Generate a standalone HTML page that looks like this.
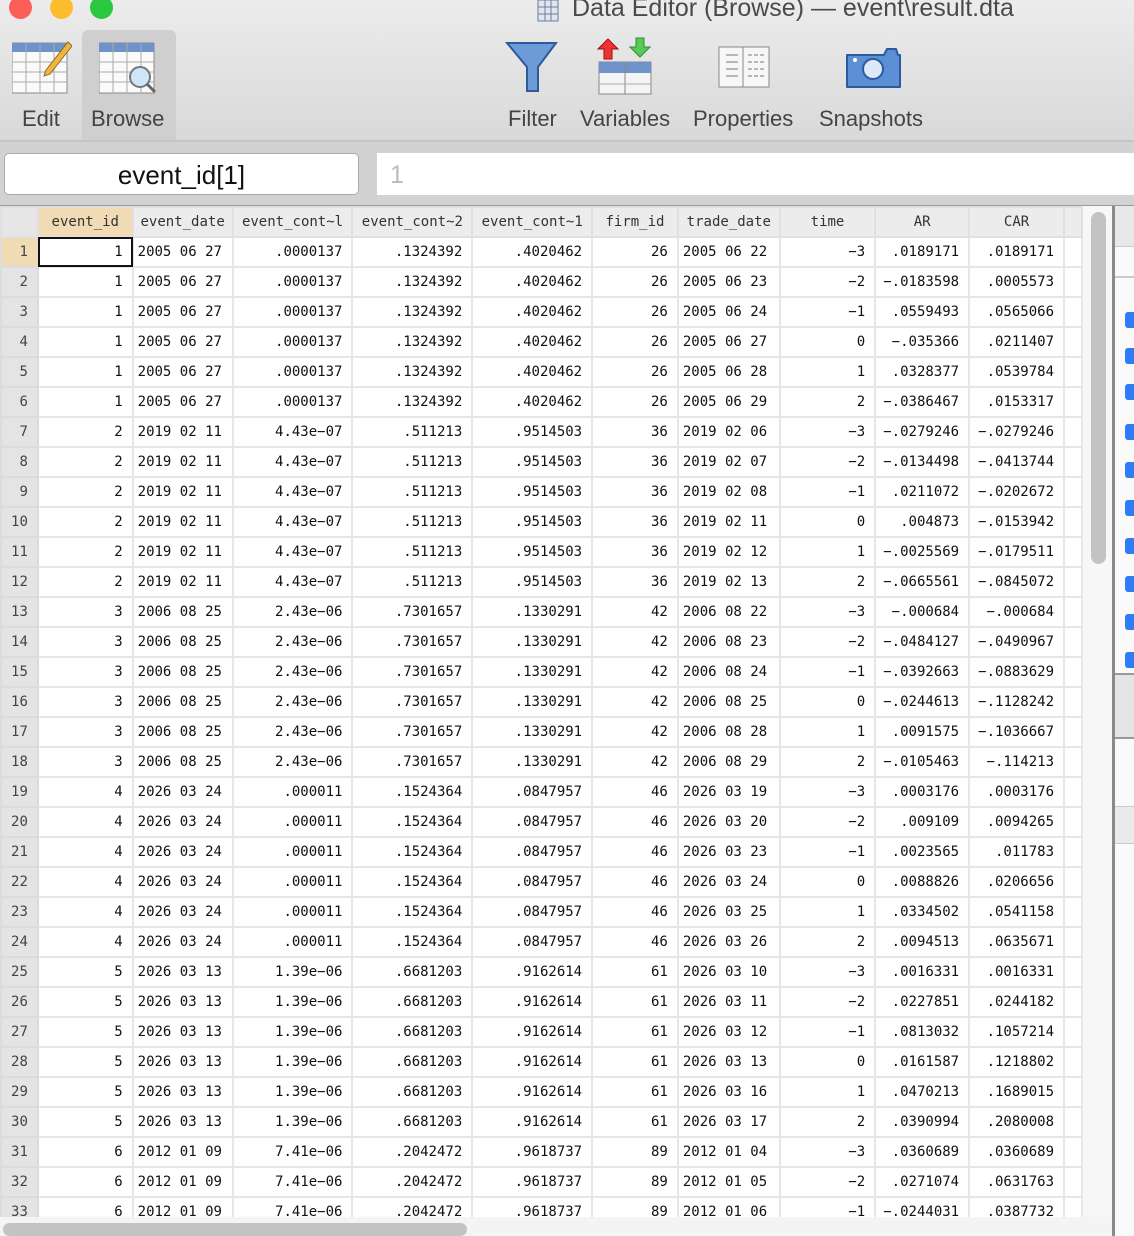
<!DOCTYPE html>
<html><head><meta charset="utf-8"><style>
body{margin:0;width:1134px;height:1236px;overflow:hidden;background:#fff;font-family:"Liberation Sans",sans-serif;position:relative}
.tb{position:absolute;left:0;top:0;width:1134px;height:140px;background:linear-gradient(#ececec,#d9d9d9);border-bottom:2px solid #c4c4c4}
.title{position:absolute;left:572px;top:-6px;font-size:25px;color:#4a4a4a}
.dot{position:absolute;top:-4px;width:23px;height:23px;border-radius:50%}
.lbl{position:absolute;top:106px;font-size:22px;color:#444}
.band{position:absolute;left:0;top:142px;width:1134px;height:63px;background:#d2d2d2;border-bottom:3px solid #9a9a9a}
.box1{position:absolute;left:4px;top:153px;width:353px;height:40px;background:#fff;border:1px solid #aaa;border-radius:5px;font-size:26px;text-align:center;line-height:42px;color:#111}
.box2{position:absolute;left:377px;top:153px;width:757px;height:42px;background:#fff;font-size:25px;line-height:44px;color:#bbb;padding-left:13px;box-sizing:border-box}
.grid{position:absolute;left:0;top:206px;width:1083px;height:1011px;overflow:hidden;background:#fff}
table{border-collapse:collapse;table-layout:fixed;font-family:"DejaVu Sans Mono","Liberation Mono",monospace;font-size:14px;color:#111}
td{height:28px;border:2px solid #e6e6e6;padding:0 9px 0 0;text-align:right;white-space:nowrap;overflow:hidden}
tr.h td{background:#ececec;color:#333;text-align:center;padding:0;border-color:#e0e0e0}
td.n{background:#e4e4e4;color:#444;padding-right:9px;border-color:#dcdcdc}
td.d{text-align:left;padding-left:4px}
.vs{position:absolute;left:1083px;top:206px;width:29px;height:1011px;background:#f7f7f7}
.vt{position:absolute;left:1091px;top:212px;width:15px;height:352px;border-radius:8px;background:#c3c3c3}
.hs{position:absolute;left:0;top:1217px;width:1112px;height:19px;background:#f4f4f4}
.ht{position:absolute;left:3px;top:1223px;width:464px;height:13px;border-radius:7px;background:#c3c3c3}
.rp{position:absolute;left:1112px;top:206px;width:22px;height:1030px;background:#fafafa;border-left:3px solid #8a8a8a}
.cb{position:absolute;left:1125px;width:12px;height:16px;background:#2f7df6;border-radius:3px}
</style></head><body>
<div class="tb">
<div class="dot" style="left:9px;background:#fc5f57"></div>
<div class="dot" style="left:50px;background:#fdbc2e"></div>
<div class="dot" style="left:90px;background:#29c840"></div>
<svg style="position:absolute;left:537px;top:0" width="22" height="22"><rect x="1" y="0" width="20" height="21" fill="#dfe6ef" stroke="#6b7f99"/><g stroke="#6b7f99"><line x1="1" y1="7" x2="21" y2="7"/><line x1="1" y1="14" x2="21" y2="14"/><line x1="8" y1="0" x2="8" y2="21"/><line x1="14" y1="0" x2="14" y2="21"/></g></svg>
<div class="title">Data Editor (Browse) — event\result.dta</div>
<div style="position:absolute;left:82px;top:30px;width:94px;height:110px;background:#cfcfcf;border-radius:6px 6px 0 0"></div>
<svg style="position:absolute;left:12px;top:40px" width="60" height="54"><rect x="0" y="3" width="55" height="50" fill="#fafafa" stroke="#888"/><rect x="0" y="3" width="55" height="9" fill="#6f93c8"/><g stroke="#aaa"><line x1="0" y1="22" x2="55" y2="22"/><line x1="0" y1="32" x2="55" y2="32"/><line x1="0" y1="42" x2="55" y2="42"/><line x1="14" y1="3" x2="14" y2="53"/><line x1="28" y1="3" x2="28" y2="53"/><line x1="42" y1="3" x2="42" y2="53"/></g><path d="M34 30 L56 2 L60 6 L38 34 L32 36Z" fill="#f1b640" stroke="#8a6a20"/></svg>
<svg style="position:absolute;left:99px;top:42px" width="62" height="54"><rect x="0" y="1" width="55" height="50" fill="#fafafa" stroke="#888"/><rect x="0" y="1" width="55" height="9" fill="#6f93c8"/><g stroke="#aaa"><line x1="0" y1="20" x2="55" y2="20"/><line x1="0" y1="30" x2="55" y2="30"/><line x1="0" y1="40" x2="55" y2="40"/><line x1="14" y1="1" x2="14" y2="51"/><line x1="28" y1="1" x2="28" y2="51"/><line x1="42" y1="1" x2="42" y2="51"/></g><circle cx="41" cy="35" r="10" fill="#cfe6f7" stroke="#777" stroke-width="2"/><line x1="48" y1="42" x2="56" y2="50" stroke="#666" stroke-width="3"/></svg>
<div class="lbl" style="left:22px">Edit</div><div class="lbl" style="left:91px">Browse</div>
<svg style="position:absolute;left:505px;top:41px" width="54" height="54"><path d="M2 2 H51 L33 26 V50 H22 V26Z" fill="#6c9bd8" stroke="#2c5a9a" stroke-width="2"/></svg>
<svg style="position:absolute;left:596px;top:37px" width="62" height="60"><path d="M12 2 L22 12 H16 V22 H8 V12 H2Z" fill="#e33" stroke="#911"/><path d="M44 20 L54 10 H48 V1 H40 V10 H34Z" fill="#5c5" stroke="#383"/><rect x="3" y="25" width="52" height="32" fill="#f4f4f4" stroke="#888"/><rect x="3" y="25" width="52" height="11" fill="#6f93c8"/><line x1="29" y1="25" x2="29" y2="57" stroke="#888"/><line x1="3" y1="47" x2="55" y2="47" stroke="#aaa"/></svg>
<div class="lbl" style="left:508px">Filter</div><div class="lbl" style="left:580px">Variables</div>
<svg style="position:absolute;left:718px;top:46px" width="54" height="44"><rect x="1" y="1" width="50" height="40" fill="#f7f7f7" stroke="#888"/><line x1="25" y1="1" x2="25" y2="41" stroke="#888"/><g stroke="#777"><line x1="8" y1="9" x2="20" y2="9"/><line x1="8" y1="16" x2="20" y2="16"/><line x1="8" y1="23" x2="20" y2="23"/><line x1="8" y1="30" x2="20" y2="30"/><line x1="30" y1="9" x2="46" y2="9" stroke-dasharray="4 2"/><line x1="30" y1="16" x2="46" y2="16" stroke-dasharray="4 2"/><line x1="30" y1="23" x2="46" y2="23" stroke-dasharray="4 2"/><line x1="30" y1="30" x2="46" y2="30" stroke-dasharray="4 2"/></g></svg>
<svg style="position:absolute;left:846px;top:47px" width="56" height="42"><path d="M1 8 H38 L41 2 H50 L52 8 H54 V40 H1Z" fill="#5c8fd6" stroke="#2b5a9f" stroke-width="2" stroke-linejoin="round"/><circle cx="27" cy="22" r="10" fill="#dbe9f8" stroke="#2b5a9f" stroke-width="2"/><circle cx="9" cy="13" r="2" fill="#fff"/></svg>
<div class="lbl" style="left:693px">Properties</div><div class="lbl" style="left:819px">Snapshots</div>
</div>
<div class="band"></div>
<div class="box1">event_id[1]</div>
<div class="box2">1</div>
<div class="grid"><table>
<colgroup><col style="width:37px"><col style="width:95px"><col style="width:100px"><col style="width:120px"><col style="width:120px"><col style="width:120px"><col style="width:86px"><col style="width:102px"><col style="width:96px"><col style="width:94px"><col style="width:95px"><col style="width:18px"></colgroup>
<tr class="h"><td style="background:#e6e6e6"></td><td style="background:#f1dbb4">event_id</td><td>event_date</td><td>event_cont~l</td><td>event_cont~2</td><td>event_cont~1</td><td>firm_id</td><td>trade_date</td><td>time</td><td>AR</td><td>CAR</td><td></td></tr>
<tr><td class="n" style="background:#f1dbb4">1</td><td style="outline:2px solid #111;outline-offset:-2px">1</td><td class="d">2005 06 27</td><td>.0000137</td><td>.1324392</td><td>.4020462</td><td>26</td><td class="d">2005 06 22</td><td>−3</td><td>.0189171</td><td>.0189171</td><td></td></tr>
<tr><td class="n">2</td><td>1</td><td class="d">2005 06 27</td><td>.0000137</td><td>.1324392</td><td>.4020462</td><td>26</td><td class="d">2005 06 23</td><td>−2</td><td>−.0183598</td><td>.0005573</td><td></td></tr>
<tr><td class="n">3</td><td>1</td><td class="d">2005 06 27</td><td>.0000137</td><td>.1324392</td><td>.4020462</td><td>26</td><td class="d">2005 06 24</td><td>−1</td><td>.0559493</td><td>.0565066</td><td></td></tr>
<tr><td class="n">4</td><td>1</td><td class="d">2005 06 27</td><td>.0000137</td><td>.1324392</td><td>.4020462</td><td>26</td><td class="d">2005 06 27</td><td>0</td><td>−.035366</td><td>.0211407</td><td></td></tr>
<tr><td class="n">5</td><td>1</td><td class="d">2005 06 27</td><td>.0000137</td><td>.1324392</td><td>.4020462</td><td>26</td><td class="d">2005 06 28</td><td>1</td><td>.0328377</td><td>.0539784</td><td></td></tr>
<tr><td class="n">6</td><td>1</td><td class="d">2005 06 27</td><td>.0000137</td><td>.1324392</td><td>.4020462</td><td>26</td><td class="d">2005 06 29</td><td>2</td><td>−.0386467</td><td>.0153317</td><td></td></tr>
<tr><td class="n">7</td><td>2</td><td class="d">2019 02 11</td><td>4.43e−07</td><td>.511213</td><td>.9514503</td><td>36</td><td class="d">2019 02 06</td><td>−3</td><td>−.0279246</td><td>−.0279246</td><td></td></tr>
<tr><td class="n">8</td><td>2</td><td class="d">2019 02 11</td><td>4.43e−07</td><td>.511213</td><td>.9514503</td><td>36</td><td class="d">2019 02 07</td><td>−2</td><td>−.0134498</td><td>−.0413744</td><td></td></tr>
<tr><td class="n">9</td><td>2</td><td class="d">2019 02 11</td><td>4.43e−07</td><td>.511213</td><td>.9514503</td><td>36</td><td class="d">2019 02 08</td><td>−1</td><td>.0211072</td><td>−.0202672</td><td></td></tr>
<tr><td class="n">10</td><td>2</td><td class="d">2019 02 11</td><td>4.43e−07</td><td>.511213</td><td>.9514503</td><td>36</td><td class="d">2019 02 11</td><td>0</td><td>.004873</td><td>−.0153942</td><td></td></tr>
<tr><td class="n">11</td><td>2</td><td class="d">2019 02 11</td><td>4.43e−07</td><td>.511213</td><td>.9514503</td><td>36</td><td class="d">2019 02 12</td><td>1</td><td>−.0025569</td><td>−.0179511</td><td></td></tr>
<tr><td class="n">12</td><td>2</td><td class="d">2019 02 11</td><td>4.43e−07</td><td>.511213</td><td>.9514503</td><td>36</td><td class="d">2019 02 13</td><td>2</td><td>−.0665561</td><td>−.0845072</td><td></td></tr>
<tr><td class="n">13</td><td>3</td><td class="d">2006 08 25</td><td>2.43e−06</td><td>.7301657</td><td>.1330291</td><td>42</td><td class="d">2006 08 22</td><td>−3</td><td>−.000684</td><td>−.000684</td><td></td></tr>
<tr><td class="n">14</td><td>3</td><td class="d">2006 08 25</td><td>2.43e−06</td><td>.7301657</td><td>.1330291</td><td>42</td><td class="d">2006 08 23</td><td>−2</td><td>−.0484127</td><td>−.0490967</td><td></td></tr>
<tr><td class="n">15</td><td>3</td><td class="d">2006 08 25</td><td>2.43e−06</td><td>.7301657</td><td>.1330291</td><td>42</td><td class="d">2006 08 24</td><td>−1</td><td>−.0392663</td><td>−.0883629</td><td></td></tr>
<tr><td class="n">16</td><td>3</td><td class="d">2006 08 25</td><td>2.43e−06</td><td>.7301657</td><td>.1330291</td><td>42</td><td class="d">2006 08 25</td><td>0</td><td>−.0244613</td><td>−.1128242</td><td></td></tr>
<tr><td class="n">17</td><td>3</td><td class="d">2006 08 25</td><td>2.43e−06</td><td>.7301657</td><td>.1330291</td><td>42</td><td class="d">2006 08 28</td><td>1</td><td>.0091575</td><td>−.1036667</td><td></td></tr>
<tr><td class="n">18</td><td>3</td><td class="d">2006 08 25</td><td>2.43e−06</td><td>.7301657</td><td>.1330291</td><td>42</td><td class="d">2006 08 29</td><td>2</td><td>−.0105463</td><td>−.114213</td><td></td></tr>
<tr><td class="n">19</td><td>4</td><td class="d">2026 03 24</td><td>.000011</td><td>.1524364</td><td>.0847957</td><td>46</td><td class="d">2026 03 19</td><td>−3</td><td>.0003176</td><td>.0003176</td><td></td></tr>
<tr><td class="n">20</td><td>4</td><td class="d">2026 03 24</td><td>.000011</td><td>.1524364</td><td>.0847957</td><td>46</td><td class="d">2026 03 20</td><td>−2</td><td>.009109</td><td>.0094265</td><td></td></tr>
<tr><td class="n">21</td><td>4</td><td class="d">2026 03 24</td><td>.000011</td><td>.1524364</td><td>.0847957</td><td>46</td><td class="d">2026 03 23</td><td>−1</td><td>.0023565</td><td>.011783</td><td></td></tr>
<tr><td class="n">22</td><td>4</td><td class="d">2026 03 24</td><td>.000011</td><td>.1524364</td><td>.0847957</td><td>46</td><td class="d">2026 03 24</td><td>0</td><td>.0088826</td><td>.0206656</td><td></td></tr>
<tr><td class="n">23</td><td>4</td><td class="d">2026 03 24</td><td>.000011</td><td>.1524364</td><td>.0847957</td><td>46</td><td class="d">2026 03 25</td><td>1</td><td>.0334502</td><td>.0541158</td><td></td></tr>
<tr><td class="n">24</td><td>4</td><td class="d">2026 03 24</td><td>.000011</td><td>.1524364</td><td>.0847957</td><td>46</td><td class="d">2026 03 26</td><td>2</td><td>.0094513</td><td>.0635671</td><td></td></tr>
<tr><td class="n">25</td><td>5</td><td class="d">2026 03 13</td><td>1.39e−06</td><td>.6681203</td><td>.9162614</td><td>61</td><td class="d">2026 03 10</td><td>−3</td><td>.0016331</td><td>.0016331</td><td></td></tr>
<tr><td class="n">26</td><td>5</td><td class="d">2026 03 13</td><td>1.39e−06</td><td>.6681203</td><td>.9162614</td><td>61</td><td class="d">2026 03 11</td><td>−2</td><td>.0227851</td><td>.0244182</td><td></td></tr>
<tr><td class="n">27</td><td>5</td><td class="d">2026 03 13</td><td>1.39e−06</td><td>.6681203</td><td>.9162614</td><td>61</td><td class="d">2026 03 12</td><td>−1</td><td>.0813032</td><td>.1057214</td><td></td></tr>
<tr><td class="n">28</td><td>5</td><td class="d">2026 03 13</td><td>1.39e−06</td><td>.6681203</td><td>.9162614</td><td>61</td><td class="d">2026 03 13</td><td>0</td><td>.0161587</td><td>.1218802</td><td></td></tr>
<tr><td class="n">29</td><td>5</td><td class="d">2026 03 13</td><td>1.39e−06</td><td>.6681203</td><td>.9162614</td><td>61</td><td class="d">2026 03 16</td><td>1</td><td>.0470213</td><td>.1689015</td><td></td></tr>
<tr><td class="n">30</td><td>5</td><td class="d">2026 03 13</td><td>1.39e−06</td><td>.6681203</td><td>.9162614</td><td>61</td><td class="d">2026 03 17</td><td>2</td><td>.0390994</td><td>.2080008</td><td></td></tr>
<tr><td class="n">31</td><td>6</td><td class="d">2012 01 09</td><td>7.41e−06</td><td>.2042472</td><td>.9618737</td><td>89</td><td class="d">2012 01 04</td><td>−3</td><td>.0360689</td><td>.0360689</td><td></td></tr>
<tr><td class="n">32</td><td>6</td><td class="d">2012 01 09</td><td>7.41e−06</td><td>.2042472</td><td>.9618737</td><td>89</td><td class="d">2012 01 05</td><td>−2</td><td>.0271074</td><td>.0631763</td><td></td></tr>
<tr><td class="n">33</td><td>6</td><td class="d">2012 01 09</td><td>7.41e−06</td><td>.2042472</td><td>.9618737</td><td>89</td><td class="d">2012 01 06</td><td>−1</td><td>−.0244031</td><td>.0387732</td><td></td></tr>
</table></div>
<div class="vs"></div><div class="vt"></div>
<div class="hs"></div><div class="ht"></div>
<div class="rp">
<div style="position:absolute;left:0;top:0;width:22px;height:40px;background:#e8e8e8;border-bottom:1px solid #ccc"></div>
<div style="position:absolute;left:0;top:70px;width:22px;height:2px;background:#ccc"></div>
<div style="position:absolute;left:0;top:467px;width:22px;height:62px;background:#e4e4e4;border-top:2px solid #999;border-bottom:2px solid #999"></div>
<div style="position:absolute;left:0;top:600px;width:22px;height:36px;background:#eaeaea;border-top:1px solid #ccc;border-bottom:1px solid #ccc"></div>
</div>
<div class="cb" style="top:312px"></div><div class="cb" style="top:348px"></div><div class="cb" style="top:384px"></div><div class="cb" style="top:424px"></div><div class="cb" style="top:462px"></div><div class="cb" style="top:500px"></div><div class="cb" style="top:538px"></div><div class="cb" style="top:576px"></div><div class="cb" style="top:614px"></div><div class="cb" style="top:652px"></div>
</body></html>
